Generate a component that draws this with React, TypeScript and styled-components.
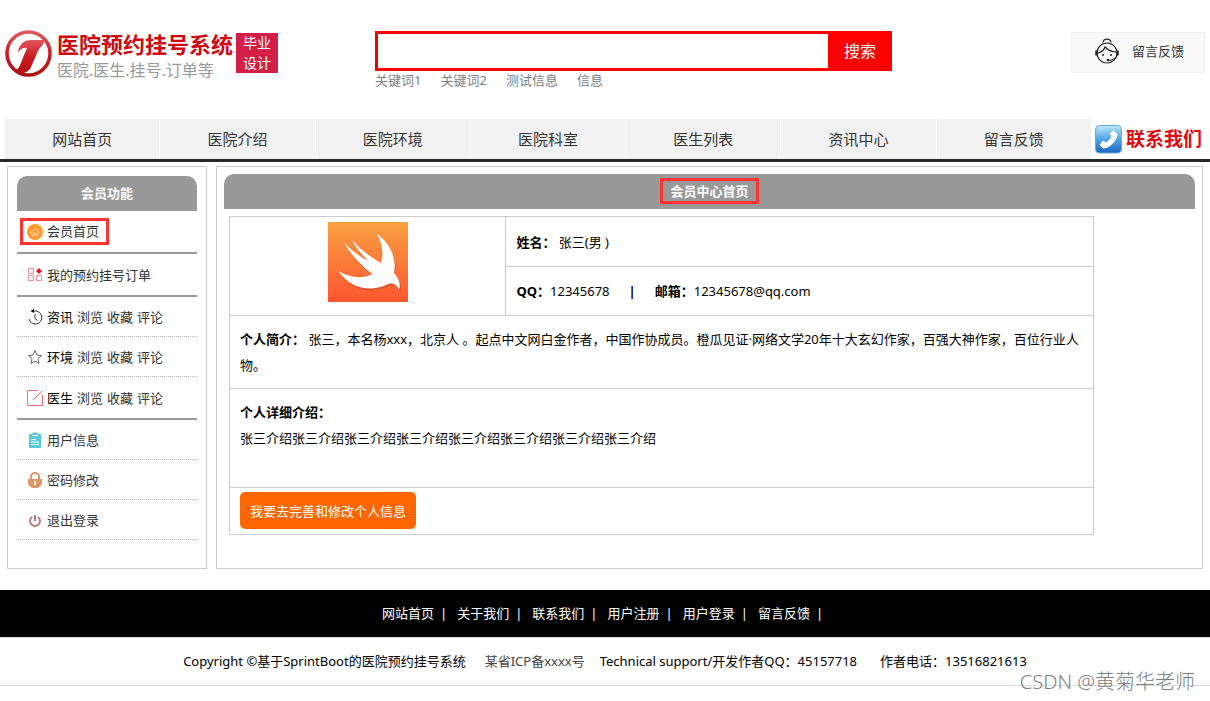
import React from "react";
import styled, { createGlobalStyle, css } from "styled-components";

const Global = createGlobalStyle`
  * { box-sizing: border-box; }
  body {
    margin: 0;
    background: #fff;
    color: #000;
    font: 13px/26px "Noto Sans", "Noto Sans CJK SC", sans-serif;
  }
  #root { min-height: 100vh; }
  a { color: inherit; text-decoration: none; }
  svg { display: block; flex: none; }
`;

const Header = styled.header`
  display: grid;
  grid-template-columns: 370px minmax(0, 517px) 1fr;
  align-items: start;
  height: 119px;
  padding: 29px 5px 0;
`;

const Brand = styled.a`
  display: flex;
  align-items: flex-start;
  white-space: nowrap;
`;

const BrandText = styled.span`
  margin-left: 5px;
`;

const BrandName = styled.strong`
  display: block;
  color: #cc0a10;
  font-size: 22px;
  line-height: 30px;
`;

const BrandSub = styled.span`
  display: block;
  color: #999;
  font-size: 16px;
  line-height: 22px;
`;

const Badge = styled.span`
  width: 42px;
  margin: 4px 0 0 3px;
  background: #d31f48;
  color: #fff;
  font-size: 14px;
  line-height: 20px;
  text-align: center;
  white-space: normal;
  padding: 0 5px;
`;

const SearchArea = styled.div`
  padding-top: 2px;
`;

const SearchForm = styled.form`
  display: flex;
  height: 40px;
  border: 3px solid #f00;
  border-right: 0;
`;

const SearchInput = styled.input`
  flex: 1;
  min-width: 0;
  border: 0;
  padding: 0 8px;
  font: inherit;
  outline: 0;
`;

const SearchButton = styled.button`
  width: 64px;
  border: 0;
  padding: 0;
  background: #f00;
  color: #fff;
  font: inherit;
  font-size: 16px;
`;

const Keywords = styled.div`
  display: flex;
  gap: 19px;
  color: #808080;
  line-height: 18px;
`;

const Feedback = styled.a`
  justify-self: end;
  display: flex;
  align-items: center;
  gap: 13px;
  width: 134px;
  height: 41px;
  margin-top: 3px;
  padding: 0 0 3px 23px;
  border: 1px solid #f0f0f0;
  background: #fafafa;
  color: #333;
`;

const Nav = styled.nav`
  display: flex;
  height: 43px;
  padding: 0 5px;
  border-bottom: 3px solid #282828;
`;

const NavLink = styled.a`
  flex: 1;
  background: #f1f1f1;
  color: #333;
  font-size: 15px;
  line-height: 40px;
  text-align: center;
  & + & { border-left: 1px solid #fff; }
`;

const Contact = styled.a`
  display: flex;
  align-items: center;
  gap: 4px;
  width: 114px;
  padding-left: 4px;
  color: #dc0a12;
  font-size: 19px;
  font-weight: 700;
  white-space: nowrap;
`;

const Columns = styled.div`
  display: flex;
  gap: 9px;
  padding: 4px 7px 21px;
`;

const Sidebar = styled.aside`
  flex: none;
  width: 200px;
  padding: 9px 9px 28px;
  border: 1px solid #ccc;
`;

const Main = styled.main`
  flex: 1;
  min-width: 0;
  padding: 7px;
  border: 1px solid #ccc;
`;

const PanelTitle = styled.h2`
  margin: 0;
  border-radius: 10px 10px 0 0;
  background: #999;
  color: #fff;
  font-size: 13px;
  line-height: 35px;
  text-align: center;
`;

const PanelBody = styled.div`
  padding: 7px 5px 0;
`;

const Marked = styled.span<{ $x: number }>`
  position: relative;
  &::after {
    content: "";
    position: absolute;
    inset: -4px ${(p) => -p.$x}px;
    border: 3px solid #ff3333;
    pointer-events: none;
  }
`;

const Menu = styled.ul`
  list-style: none;
  margin: 0;
  padding: 0;
`;

const MenuRow = styled.li<{ $group?: boolean }>`
  display: flex;
  align-items: center;
  gap: 4px;
  padding-left: 10px;
  color: #333;
  ${(p) =>
    p.$group
      ? css`
          height: 43px;
          border-bottom: 2px solid #999;
        `
      : css`
          height: 40px;
          border-bottom: 1px dotted #bbb;
        `}
`;

const MarkedRow = styled(Marked)`
  display: flex;
  align-items: center;
  gap: 4px;
  line-height: 19px;
`;

const Topic = styled.span`
  color: #000;
`;

const Profile = styled.table`
  width: 90%;
  border-collapse: collapse;
  table-layout: fixed;
`;

const Cell = styled.td<{ $h?: number; $tight?: boolean; $top?: boolean }>`
  height: ${(p) => (p.$h ? p.$h + "px" : "auto")};
  padding: ${(p) => (p.$tight ? "4px 10px 5px" : "10px")};
  border: 1px solid #ccc;
  vertical-align: ${(p) => (p.$top ? "top" : "middle")};
`;

const PictureColumn = styled.col`
  width: 32%;
`;

const Avatar = styled.div`
  display: flex;
  justify-content: center;
  padding-top: 1px;
`;

const Bar = styled.b`
  margin: 0 19px;
`;

const Primary = styled.button`
  display: block;
  height: 37px;
  padding: 0 10px;
  border: 0;
  border-radius: 5px;
  background: #f60;
  color: #fff;
  font: inherit;
`;

const FooterNav = styled.nav`
  display: flex;
  justify-content: center;
  padding-left: 5px;
  background: #000;
  color: #fff;
  line-height: 47px;
`;

const FooterItem = styled.span`
  display: flex;
  gap: 6px;
  padding-right: 10px;
  &::after { content: "|"; }
`;

const Copyright = styled.footer`
  position: relative;
  display: flex;
  justify-content: center;
  border: solid #ddd;
  border-width: 1px 0;
  line-height: 47px;
  white-space: pre;
`;

const Icp = styled.a`
  margin: 0 15px 0 19px;
  color: #444;
`;

const Phone = styled.span`
  margin-left: 23px;
`;

const Watermark = styled.span`
  position: absolute;
  right: 15px;
  bottom: -12px;
  color: #808080;
  font-size: 20px;
  font-weight: 300;
  line-height: 30px;
`;

const LogoMark = () => (
  <svg width="47" height="48" viewBox="0 0 47 48" aria-hidden="true">
    <defs>
      <linearGradient id="ring" x1="0" y1="0" x2="0" y2="1">
        <stop offset="0" stopColor="#e0585c" />
        <stop offset="0.5" stopColor="#cc1c22" />
        <stop offset="1" stopColor="#b01015" />
      </linearGradient>
    </defs>
    <circle cx="23.500" cy="24.500" r="21.500" fill="#fff" stroke="url(#ring)" strokeWidth="3.500" />
    <path
      d="M13 24C14 15 19 11 26 11H40L37 17C35 18 34 20 33 22L26 38C23 45 14 46 8 41C12 41 14 39 15 36L22 19C18 18 15 20 13 24Z"
      fill="url(#ring)"
    />
  </svg>
);

const AgentIcon = () => (
  <svg width="24" height="27" viewBox="0 0 24 27" fill="none" stroke="#222" strokeWidth="1.200" aria-hidden="true">
    <path d="M8 4.500C8.500 0 15.500 0 16 4.500" />
    <circle cx="12" cy="15" r="10" />
    <path d="M3 15C7 14 9 12 10 9C13 12 17 14 21 14" />
    <path d="M1.500 12.500v5M22.500 12.500v5" strokeWidth="2.500" />
    <path d="M21 19C19 22 17 22.500 13 22.500" />
    <g fill="#222" stroke="none">
      <circle cx="8" cy="17" r="1" />
      <circle cx="16" cy="17" r="1" />
      <circle cx="13" cy="22" r="1.300" />
    </g>
  </svg>
);

const PhoneIcon = () => (
  <svg width="27" height="29" viewBox="0 0 27 29" aria-hidden="true">
    <defs>
      <linearGradient id="phone" x1="0" y1="0" x2="0" y2="1">
        <stop offset="0" stopColor="#bfe6fa" />
        <stop offset="0.450" stopColor="#58ade6" />
        <stop offset="1" stopColor="#1c66c0" />
      </linearGradient>
    </defs>
    <rect x="0.500" y="0.500" width="26" height="27.500" rx="4" fill="url(#phone)" stroke="#6aa9dc" />
    <path
      d="M18 6L22 9C22 15 15 23 8 23L5 20L8 16L11 18C14 16 16 14 17 11L15 9Z"
      fill="#fff"
      strokeLinejoin="round"
      stroke="#fff"
    />
  </svg>
);

const HomeIcon = () => (
  <svg width="16" height="16" viewBox="0 0 16 16" fill="none" aria-hidden="true">
    <circle cx="8" cy="8" r="8" fill="#ff9a2e" />
    <path d="M3.500 8.500L8 5l4.500 3.500M5 8v4h2v-3h2v3h2V8M10.500 4v2.500" stroke="#ffd6a3" />
  </svg>
);

const OrderIcon = () => (
  <svg width="16" height="16" viewBox="0 0 16 16" fill="none" stroke="#f08a94" aria-hidden="true">
    <path d="M1.500 1.500h5v5h-5zM1.500 8.500h5v5h-5zM9.500 8.500h5v5h-5z" />
    <path d="M12 1l3 3-3 3-3-3z" fill="#e8101c" stroke="none" />
  </svg>
);

const HistoryIcon = () => (
  <svg width="16" height="16" viewBox="0 0 16 16" fill="none" stroke="#333" aria-hidden="true">
    <path d="M5 2H8.500A6.500 6.500 0 1 1 2 10M8 5v4.500l2.500 2" />
    <path d="M7 0v4L3.500 2z" fill="#000" stroke="none" />
  </svg>
);

const StarIcon = () => (
  <svg width="16" height="16" viewBox="0 0 16 16" fill="none" stroke="#666" aria-hidden="true">
    <path d="M8 1.500L10 6l4.500.500L11 9.500l1 5L8 12l-4 2.500 1-5L1.500 6.500 6 6z" strokeLinejoin="round" />
  </svg>
);

const EditIcon = () => (
  <svg width="16" height="16" viewBox="0 0 16 16" fill="none" stroke="#f4696f" aria-hidden="true">
    <path d="M11 .500H.500v15h15V5M6 10L15 1" />
  </svg>
);

const ClipboardIcon = () => (
  <svg width="16" height="16" viewBox="0 0 16 16" aria-hidden="true">
    <path d="M2 2h3V1h2a1 1 0 0 1 2 0h2v1h3v14H2z" fill="#5cc8d8" />
    <path d="M5 3.500h6M4 7.500h5M4 10h8M4 12.500h8" stroke="#fff" />
  </svg>
);

const LockIcon = () => (
  <svg width="16" height="16" viewBox="0 0 16 16" aria-hidden="true">
    <path d="M4 8V4.500a4 3.500 0 0 1 8 0V8" fill="none" stroke="#e0956a" strokeWidth="2" />
    <path d="M1 7h14v3c0 4-3 6-7 6s-7-2-7-6z" fill="#e0956a" />
    <path d="M8 9v4" stroke="#fff" strokeWidth="2" />
  </svg>
);

const PowerIcon = () => (
  <svg width="16" height="16" viewBox="0 0 16 16" fill="none" stroke="#b87c7c" strokeWidth="2" aria-hidden="true">
    <path d="M5 5A5 5 0 1 0 11 5M8 3v6" />
  </svg>
);

const Swift = () => (
  <svg width="80" height="80" viewBox="0 0 80 80" role="img" aria-label="头像">
    <defs>
      <linearGradient id="swift" x1="0" y1="0" x2="0" y2="1">
        <stop offset="0" stopColor="#faa143" />
        <stop offset="1" stopColor="#fd5530" />
      </linearGradient>
    </defs>
    <rect width="80" height="80" fill="url(#swift)" />
    <path
      transform="translate(1 2)"
      fill="#b03a1a"
      opacity="0.350"
      d="M49 12C62 21 69 36 66 51C71 56 73 63 71 67.500C67 60 62 61 58 63C43 70 22 67 10.500 49C22 56 35 57 44.500 52C33 44 23 33 16 20.500C23 28 31 34 40 39C34 33 28 26 24 18C32 27 42 35 53 41C56 31 54 21 49 12Z"
    />
    <path
      fill="#fff"
      d="M49 12C62 21 69 36 66 51C71 56 73 63 71 67.500C67 60 62 61 58 63C43 70 22 67 10.500 49C22 56 35 57 44.500 52C33 44 23 33 16 20.500C23 28 31 34 40 39C34 33 28 26 24 18C32 27 42 35 53 41C56 31 54 21 49 12Z"
    />
  </svg>
);

const navItems = ["网站首页", "医院介绍", "医院环境", "医院科室", "医生列表", "资讯中心", "留言反馈"];
const keywords = ["关键词1", "关键词2", "测试信息", "信息"];
const footerItems = ["网站首页", "关于我们", "联系我们", "用户注册", "用户登录", "留言反馈"];
const topics = [
  { name: "资讯", icon: <HistoryIcon /> },
  { name: "环境", icon: <StarIcon /> },
  { name: "医生", icon: <EditIcon /> },
];
const account = [
  { name: "用户信息", icon: <ClipboardIcon /> },
  { name: "密码修改", icon: <LockIcon /> },
  { name: "退出登录", icon: <PowerIcon /> },
];

export default function App() {
  return (
    <>
      <Global />
      <Header>
        <Brand href="#">
          <LogoMark />
          <BrandText>
            <BrandName>医院预约挂号系统</BrandName>
            <BrandSub>医院.医生.挂号.订单等</BrandSub>
          </BrandText>
          <Badge>毕业设计</Badge>
        </Brand>
        <SearchArea>
          <SearchForm role="search" onSubmit={(e) => e.preventDefault()}>
            <SearchInput type="text" aria-label="搜索" />
            <SearchButton type="submit">搜索</SearchButton>
          </SearchForm>
          <Keywords>
            {keywords.map((k) => (
              <a href="#" key={k}>{k}</a>
            ))}
          </Keywords>
        </SearchArea>
        <Feedback href="#">
          <AgentIcon />
          留言反馈
        </Feedback>
      </Header>
      <Nav>
        {navItems.map((n) => (
          <NavLink href="#" key={n}>{n}</NavLink>
        ))}
        <Contact href="#">
          <PhoneIcon />
          联系我们
        </Contact>
      </Nav>
      <Columns>
        <Sidebar>
          <PanelTitle>会员功能</PanelTitle>
          <Menu>
            <MenuRow $group>
              <MarkedRow $x={7}>
                <HomeIcon />
                <a href="#">会员首页&nbsp;</a>
              </MarkedRow>
            </MenuRow>
            <MenuRow $group>
              <OrderIcon />
              <a href="#">我的预约挂号订单</a>
            </MenuRow>
            {topics.map((t, i) => (
              <MenuRow key={t.name} $group={i === topics.length - 1}>
                {t.icon}
                <Topic>{t.name}</Topic>
                <a href="#">浏览</a>
                <a href="#">收藏</a>
                <a href="#">评论</a>
              </MenuRow>
            ))}
            {account.map((a) => (
              <MenuRow key={a.name}>
                {a.icon}
                <a href="#">{a.name}</a>
              </MenuRow>
            ))}
          </Menu>
        </Sidebar>
        <Main>
          <PanelTitle>
            <Marked $x={10}>会员中心首页</Marked>
          </PanelTitle>
          <PanelBody>
            <Profile>
              <colgroup>
                <PictureColumn />
                <col />
              </colgroup>
              <tbody>
                <tr>
                  <Cell rowSpan={2} $top $tight>
                    <Avatar><Swift /></Avatar>
                  </Cell>
                  <Cell $h={50}><b>姓名：</b> 张三(男 )</Cell>
                </tr>
                <tr>
                  <Cell $h={49}>
                    <b>QQ：</b>12345678<Bar>|</Bar><b>邮箱：</b>12345678@qq.com
                  </Cell>
                </tr>
                <tr>
                  <Cell colSpan={2}>
                    <b>个人简介：</b> 张三，本名杨xxx，北京人 。起点中文网白金作者，中国作协成员。橙瓜见证·网络文学20年十大玄幻作家，百强大神作家，百位行业人物。
                  </Cell>
                </tr>
                <tr>
                  <Cell colSpan={2} $h={99} $top>
                    <b>个人详细介绍：</b>
                    <br />
                    {"张三介绍".repeat(8)}
                  </Cell>
                </tr>
                <tr>
                  <Cell colSpan={2} $tight>
                    <Primary type="button">我要去完善和修改个人信息</Primary>
                  </Cell>
                </tr>
              </tbody>
            </Profile>
          </PanelBody>
        </Main>
      </Columns>
      <FooterNav>
        {footerItems.map((f) => (
          <FooterItem key={f}>
            <a href="#">{f}</a>
          </FooterItem>
        ))}
      </FooterNav>
      <Copyright>
        <span>Copyright ©基于SprintBoot的医院预约挂号系统</span>
        <Icp href="#">某省ICP备xxxx号</Icp>
        <span>Technical support/开发作者QQ：45157718</span>
        <Phone>作者电话：13516821613</Phone>
        <Watermark>CSDN @黄菊华老师</Watermark>
      </Copyright>
    </>
  );
}
